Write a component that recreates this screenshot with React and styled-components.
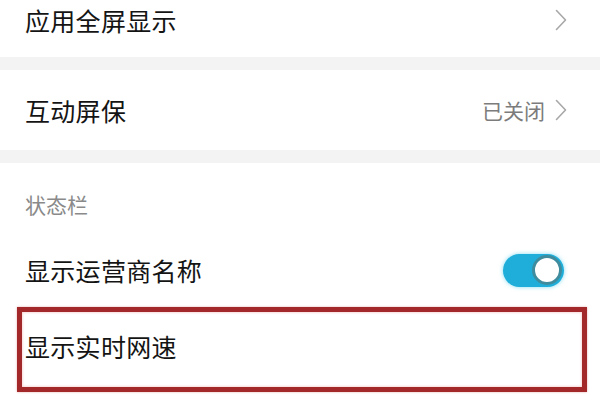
import React from 'react';
import styled, { createGlobalStyle } from 'styled-components';

const GlobalStyle = createGlobalStyle`
    html, body {
        margin: 0;
        padding: 0;
        background: #ffffff;
    }
    body {
        width: 600px;
        height: 400px;
        overflow: hidden;
        font-family: "Noto Sans CJK SC", "Noto Sans", sans-serif;
    }
`;

const Page = styled.div`
    width: 600px;
    display: flex;
    flex-direction: column;
`;

const Row = styled.div`
    display: flex;
    align-items: center;
    justify-content: space-between;
    height: ${p => p.$height || 80}px;
    margin-top: ${p => p.$cut ? -p.$cut : 0}px;
    padding: 0 ${p => p.$padRight ?? 33}px 0 ${p => p.$padLeft ?? 25}px;
    background: #ffffff;
    box-sizing: border-box;
`;

const Label = styled.span`
    font-size: 25px;
    line-height: 30px;
    color: #141414;
    letter-spacing: 0.3px;
`;

const Gap = styled.div`
    height: 13px;
    background: #f3f3f3;
`;

const SectionTitle = styled.div`
    padding: 30px 25px 0;
    height: 72px;
    box-sizing: border-box;
    font-size: 21px;
    line-height: 22px;
    color: #8a8a8a;
`;

const Trail = styled.div`
    display: flex;
    align-items: center;
    gap: 10px;
`;

const Value = styled.span`
    font-size: 21px;
    color: #7c7c7c;
`;

const Toggle = styled.div`
    width: 61px;
    height: 33px;
    border-radius: 17px;
    background: #1eaed9;
    box-shadow: 0 0 4px rgba(30, 190, 230, 0.55);
    display: flex;
    align-items: center;
    justify-content: flex-end;
    padding: 0 2px;
    box-sizing: border-box;
`;

const Knob = styled.div`
    width: 30px;
    height: 30px;
    border-radius: 50%;
    background: #ffffff;
    border: 3px solid #3f8c9e;
    box-sizing: border-box;
`;

const Highlight = styled.div`
    margin: 2px 13px 0 17px;
    height: 85px;
    border: 5px solid #a3282a;
    box-shadow: inset 0 0 3px rgba(230, 80, 80, 0.4), 0 0 2px rgba(200, 60, 60, 0.4);
    display: flex;
    align-items: center;
    padding: 0 0 7px 3px;
    box-sizing: border-box;
`;

const Chevron = () => (
    <svg width="12" height="22" viewBox="0 0 12 22" fill="none">
        <path d="M1.5 1.5 L10.5 11 L1.5 20.5" stroke="#a8a8a8" strokeWidth="1.6" strokeLinecap="round" strokeLinejoin="round" />
    </svg>
);

const App = () => (
    <Page>
        <GlobalStyle />
        <Row $height={74} $cut={17}>
            <Label>应用全屏显示</Label>
            <Chevron />
        </Row>
        <Gap />
        <Row>
            <Label>互动屏保</Label>
            <Trail>
                <Value>已关闭</Value>
                <Chevron />
            </Trail>
        </Row>
        <Gap />
        <SectionTitle>状态栏</SectionTitle>
        <Row $height={70} $padRight={36}>
            <Label>显示运营商名称</Label>
            <Toggle>
                <Knob />
            </Toggle>
        </Row>
        <Highlight>
            <Label>显示实时网速</Label>
        </Highlight>
    </Page>
);

export default App;
